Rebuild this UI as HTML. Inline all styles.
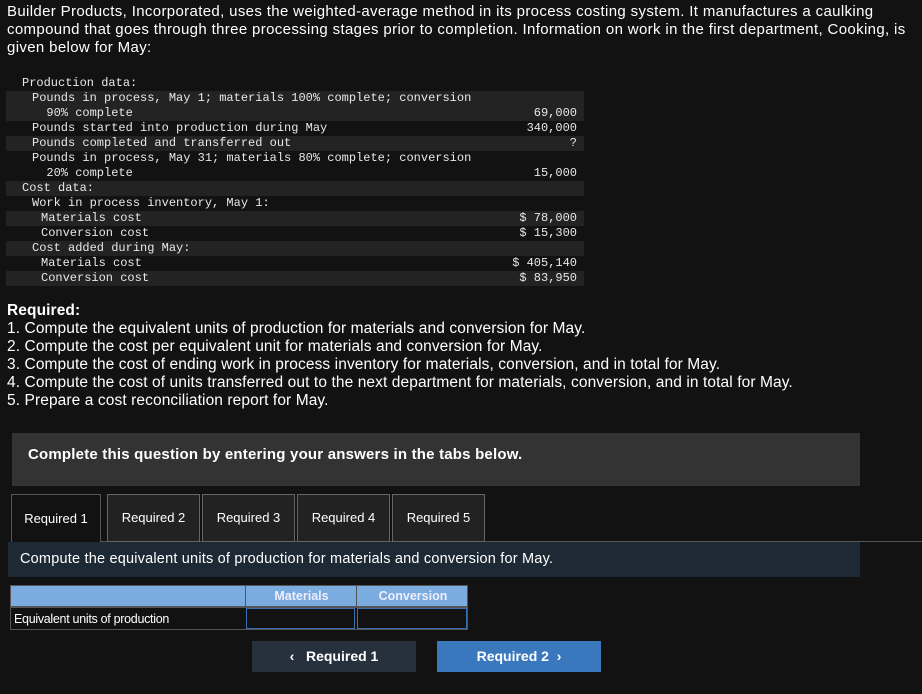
<!DOCTYPE html><html><head><style>
body{margin:0;background:#121212;width:922px;height:694px;overflow:hidden;color:#fff;font-family:"Liberation Sans",sans-serif;position:relative}
.p{position:absolute;left:7px;font-size:15px;line-height:18px;color:#fff;white-space:nowrap;letter-spacing:0.25px}
.m{position:absolute;left:6px;top:76px;width:578px;font-family:"Liberation Mono",monospace;font-size:12px;line-height:15px;color:#e8e8e8}
.r{position:relative;white-space:pre}
.s{background:#232323}
.v{position:absolute;right:7px;bottom:0}
.a{position:absolute}
</style></head><body>
<div class="p" style="top:3px;letter-spacing:0.35px">Builder Products, Incorporated, uses the weighted-average method in its process costing system. It manufactures a caulking<br>compound that goes through three processing stages prior to completion. Information on work in the first department, Cooking, is<br>given below for May:</div>
<div class="m">
<div class="r" style="padding-left:16px">Production data:</div>
<div class="r s" style="padding-left:26px">Pounds in process, May 1; materials 100% complete; conversion<br>  90% complete<span class="v">69,000</span></div>
<div class="r" style="padding-left:26px">Pounds started into production during May<span class="v">340,000</span></div>
<div class="r s" style="padding-left:26px">Pounds completed and transferred out<span class="v">?</span></div>
<div class="r" style="padding-left:26px">Pounds in process, May 31; materials 80% complete; conversion<br>  20% complete<span class="v">15,000</span></div>
<div class="r s" style="padding-left:16px">Cost data:</div>
<div class="r" style="padding-left:26px">Work in process inventory, May 1:</div>
<div class="r s" style="padding-left:35px">Materials cost<span class="v">$ 78,000</span></div>
<div class="r" style="padding-left:35px">Conversion cost<span class="v">$ 15,300</span></div>
<div class="r s" style="padding-left:26px">Cost added during May:</div>
<div class="r" style="padding-left:35px">Materials cost<span class="v">$ 405,140</span></div>
<div class="r s" style="padding-left:35px">Conversion cost<span class="v">$ 83,950</span></div>
</div>
<div class="p" style="top:302px;font-size:15.5px;letter-spacing:0.1px"><b>Required:</b><br>1. Compute the equivalent units of production for materials and conversion for May.<br>2. Compute the cost per equivalent unit for materials and conversion for May.<br>3. Compute the cost of ending work in process inventory for materials, conversion, and in total for May.<br>4. Compute the cost of units transferred out to the next department for materials, conversion, and in total for May.<br>5. Prepare a cost reconciliation report for May.</div>
<div class="a" style="left:12px;top:433px;width:848px;height:53px;background:#333"><div style="position:absolute;left:16px;top:13px;font-size:15px;font-weight:bold;letter-spacing:0.2px">Complete this question by entering your answers in the tabs below.</div></div>
<div class="a" style="left:100px;top:541px;width:822px;height:1px;background:#555"></div>
<div class="a" style="left:11px;top:494px;width:88px;height:48px;background:#121212;border:1px solid #555;border-bottom:none;font-size:13px;text-align:center;line-height:48px">Required 1</div>
<div class="a" style="left:107px;top:494px;width:91px;height:46px;background:#222;border:1px solid #666;font-size:13px;text-align:center;line-height:46px">Required 2</div>
<div class="a" style="left:202px;top:494px;width:91px;height:46px;background:#222;border:1px solid #666;font-size:13px;text-align:center;line-height:46px">Required 3</div>
<div class="a" style="left:297px;top:494px;width:91px;height:46px;background:#222;border:1px solid #666;font-size:13px;text-align:center;line-height:46px">Required 4</div>
<div class="a" style="left:392px;top:494px;width:91px;height:46px;background:#222;border:1px solid #666;font-size:13px;text-align:center;line-height:46px">Required 5</div>
<div class="a" style="left:8px;top:542px;width:852px;height:35px;background:#1d2a35;font-size:14.5px;line-height:35px;padding-left:12px;box-sizing:border-box;letter-spacing:0.2px">Compute the equivalent units of production for materials and conversion for May.</div>
<div class="a" style="left:10px;top:585px;width:458px;height:22px;background:#7aace0;border:1px solid #555;box-sizing:border-box"></div>
<div class="a" style="left:245px;top:585px;width:111px;height:22px;border-left:1px solid #555;text-align:center;font-size:12.5px;font-weight:bold;line-height:22px;color:#eef">Materials</div>
<div class="a" style="left:356px;top:585px;width:112px;height:22px;border-left:1px solid #555;text-align:center;font-size:12.5px;font-weight:bold;line-height:22px;color:#eef">Conversion</div>
<div class="a" style="left:10px;top:607px;width:458px;height:23px;border:1px solid #555;box-sizing:border-box;font-size:12.5px;line-height:22px;padding-left:3px;letter-spacing:-0.3px">Equivalent units of production</div>
<div class="a" style="left:246px;top:608px;width:109px;height:21px;border:1px solid #3a6fb0;box-sizing:border-box;background:#121212"></div>
<div class="a" style="left:357px;top:608px;width:110px;height:21px;border:1px solid #3a6fb0;box-sizing:border-box;background:#121212"></div>
<div class="a" style="left:252px;top:641px;width:164px;height:31px;background:#27313d;font-size:14px;font-weight:bold;line-height:31px;text-align:center">‹&nbsp;&nbsp; Required 1</div>
<div class="a" style="left:437px;top:641px;width:164px;height:31px;background:#3a78bd;font-size:14px;font-weight:bold;line-height:31px;text-align:center">Required 2 &nbsp;›</div>
</body></html>
